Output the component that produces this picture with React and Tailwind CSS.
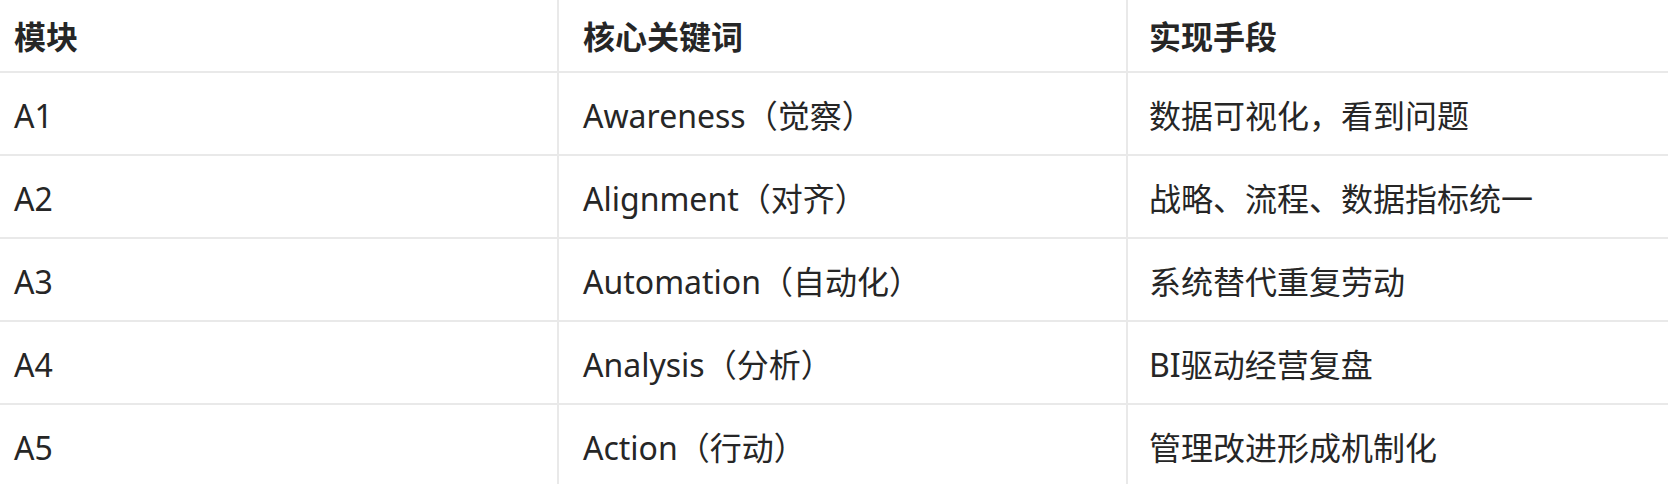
const rows = [
  ["A1", "Awareness（觉察）", "数据可视化，看到问题"],
  ["A2", "Alignment（对齐）", "战略、流程、数据指标统一"],
  ["A3", "Automation（自动化）", "系统替代重复劳动"],
  ["A4", "Analysis（分析）", "BI驱动经营复盘"],
  ["A5", "Action（行动）", "管理改进形成机制化"],
];

export default function App() {
  return (
    <div
      className="w-[1668px] h-[484px] overflow-hidden bg-white text-[#262626]"
      style={{fontFamily: '"Noto Sans", "Noto Sans CJK SC", sans-serif'}}>
      <table className="w-full table-fixed border-collapse text-[32px] leading-[42px]">
        <colgroup>
          <col className="w-[558px]" />
          <col className="w-[569px]" />
          <col />
        </colgroup>
        <thead>
          <tr className="h-[72px] border-b-2 border-[#e9e9e9]">
            <th className="pl-[14px] pt-[3px] text-left font-bold">模块</th>
            <th className="pl-[24px] pt-[3px] text-left font-bold border-l-2 border-[#e9e9e9]">核心关键词</th>
            <th className="pl-[21px] pt-[3px] text-left font-bold border-l-2 border-[#e9e9e9]">实现手段</th>
          </tr>
        </thead>
        <tbody>
          {rows.map((r) => (
            <tr key={r[0]} className="h-[83px] border-b-2 border-[#e9e9e9]">
              <td className="pl-[14px] pt-[5px]">{r[0]}</td>
              <td className="pl-[24px] pt-[5px] border-l-2 border-[#e9e9e9]">{r[1]}</td>
              <td className="pl-[21px] pt-[5px] border-l-2 border-[#e9e9e9]">{r[2]}</td>
            </tr>
          ))}
        </tbody>
      </table>
    </div>
  );
}
